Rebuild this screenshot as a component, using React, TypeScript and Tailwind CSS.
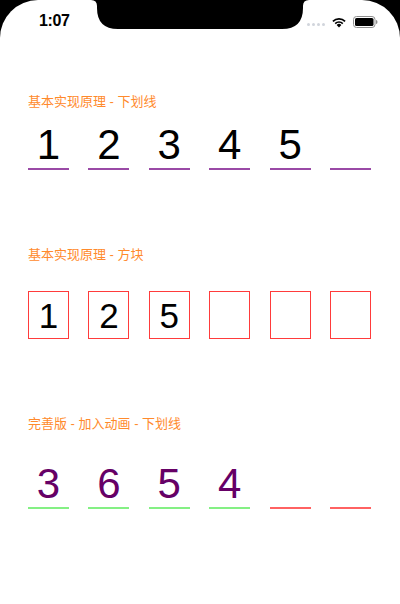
import React from 'react';

const FONT = { fontFamily: '"Liberation Sans", Arial, sans-serif' };
const CJK = { fontFamily: '"Liberation Sans", "Noto Sans CJK SC", sans-serif' };

function StatusBar() {
  return (
    <div className="relative h-[44px] flex items-center justify-between pl-[39px] pr-[22px]">
      <span className="text-[16px] font-semibold tracking-tight text-black mt-[-2px]" style={FONT}>
        1:07
      </span>
      <div className="flex items-center gap-[6px] mt-[-1px]">
        <div className="flex items-center gap-[2px] mt-[6px]">
          {[0, 1, 2, 3].map((i) => (
            <span key={i} className="w-[3px] h-[3px] rounded-full bg-gray-300" />
          ))}
        </div>
        <svg width="16" height="12" viewBox="0 0 16 12">
          <path d="M8 11.5 L5.6 9 A3.4 3.4 0 0 1 10.4 9 Z" fill="#000" />
          <path d="M3.6 7 A6.2 6.2 0 0 1 12.4 7 L11.2 8.2 A4.5 4.5 0 0 0 4.8 8.2 Z" fill="#000" />
          <path d="M1.3 4.7 A9.5 9.5 0 0 1 14.7 4.7 L13.5 5.9 A7.8 7.8 0 0 0 2.5 5.9 Z" fill="#000" />
        </svg>
        <svg width="25" height="12" viewBox="0 0 25 12">
          <rect x="0.5" y="0.5" width="21.5" height="11" rx="3" fill="none" stroke="#8e8e8e" />
          <rect x="2" y="2" width="18.5" height="8" rx="1.6" fill="#000" />
          <path d="M23 4 Q24.5 4 24.5 6 Q24.5 8 23 8 Z" fill="#8e8e8e" />
        </svg>
      </div>
    </div>
  );
}

function Notch() {
  return (
    <svg className="absolute top-0 left-[91px]" width="218" height="30" viewBox="0 0 218 30">
      <path
        d="M0 0 Q6 0 6 6 L6 8 Q6 29 27 29 L191 29 Q212 29 212 8 L212 6 Q212 0 218 0 Z"
        fill="#000"
      />
    </svg>
  );
}

function Title({ children }: { children: React.ReactNode }) {
  return (
    <div className="h-[16px] leading-[16px] text-[13px] text-[#ff8a2c]" style={CJK}>
      {children}
    </div>
  );
}

type Tone = 'plain' | 'filled' | 'empty';

const lineClass: Record<Tone, string> = {
  plain: 'border-[#9a4aa6]',
  filled: 'border-[#84f084]',
  empty: 'border-[#ff6262]',
};

function UnderlineCell({ value, textColor, tone }: { value?: string; textColor: string; tone: Tone }) {
  return (
    <div className="w-[41px] flex flex-col items-center">
      <span className={`h-[42px] leading-[42px] text-[42px] ${textColor}`} style={FONT}>
        {value ?? '\u00a0'}
      </span>
      <div className={`mt-[2px] w-full border-t-2 ${lineClass[tone]}`} />
    </div>
  );
}

export default function App() {
  const first = ['1', '2', '3', '4', '5', ''];
  const boxes = ['1', '2', '5', '', '', ''];
  const anim = ['3', '6', '5', '4', '', ''];

  return (
    <div className="w-[400px] h-[604px] bg-black overflow-hidden">
      <div className="relative w-full h-full bg-white rounded-t-[38px]">
        <Notch />
        <StatusBar />

        <div className="pl-[28px] pr-[29px]">
          <div className="mt-[50px]">
            <Title>基本实现原理 - 下划线</Title>
            <div className="mt-[14px] flex justify-between">
              {first.map((v, i) => (
                <UnderlineCell key={i} value={v || undefined} textColor="text-black" tone="plain" />
              ))}
            </div>
          </div>

          <div className="mt-[77px]">
            <Title>基本实现原理 - 方块</Title>
            <div className="mt-[28px] flex justify-between">
              {boxes.map((v, i) => (
                <div
                  key={i}
                  className="w-[41px] h-[48px] border border-[#ff3b3b] flex items-center justify-center"
                >
                  <span className="text-[35px] leading-none text-black" style={FONT}>
                    {v}
                  </span>
                </div>
              ))}
            </div>
          </div>

          <div className="mt-[77px]">
            <Title>完善版 - 加入动画 - 下划线</Title>
            <div className="mt-[31px] flex justify-between">
              {anim.map((v, i) => (
                <UnderlineCell
                  key={i}
                  value={v || undefined}
                  textColor="text-[#660066]"
                  tone={v ? 'filled' : 'empty'}
                />
              ))}
            </div>
          </div>
        </div>
      </div>
    </div>
  );
}
